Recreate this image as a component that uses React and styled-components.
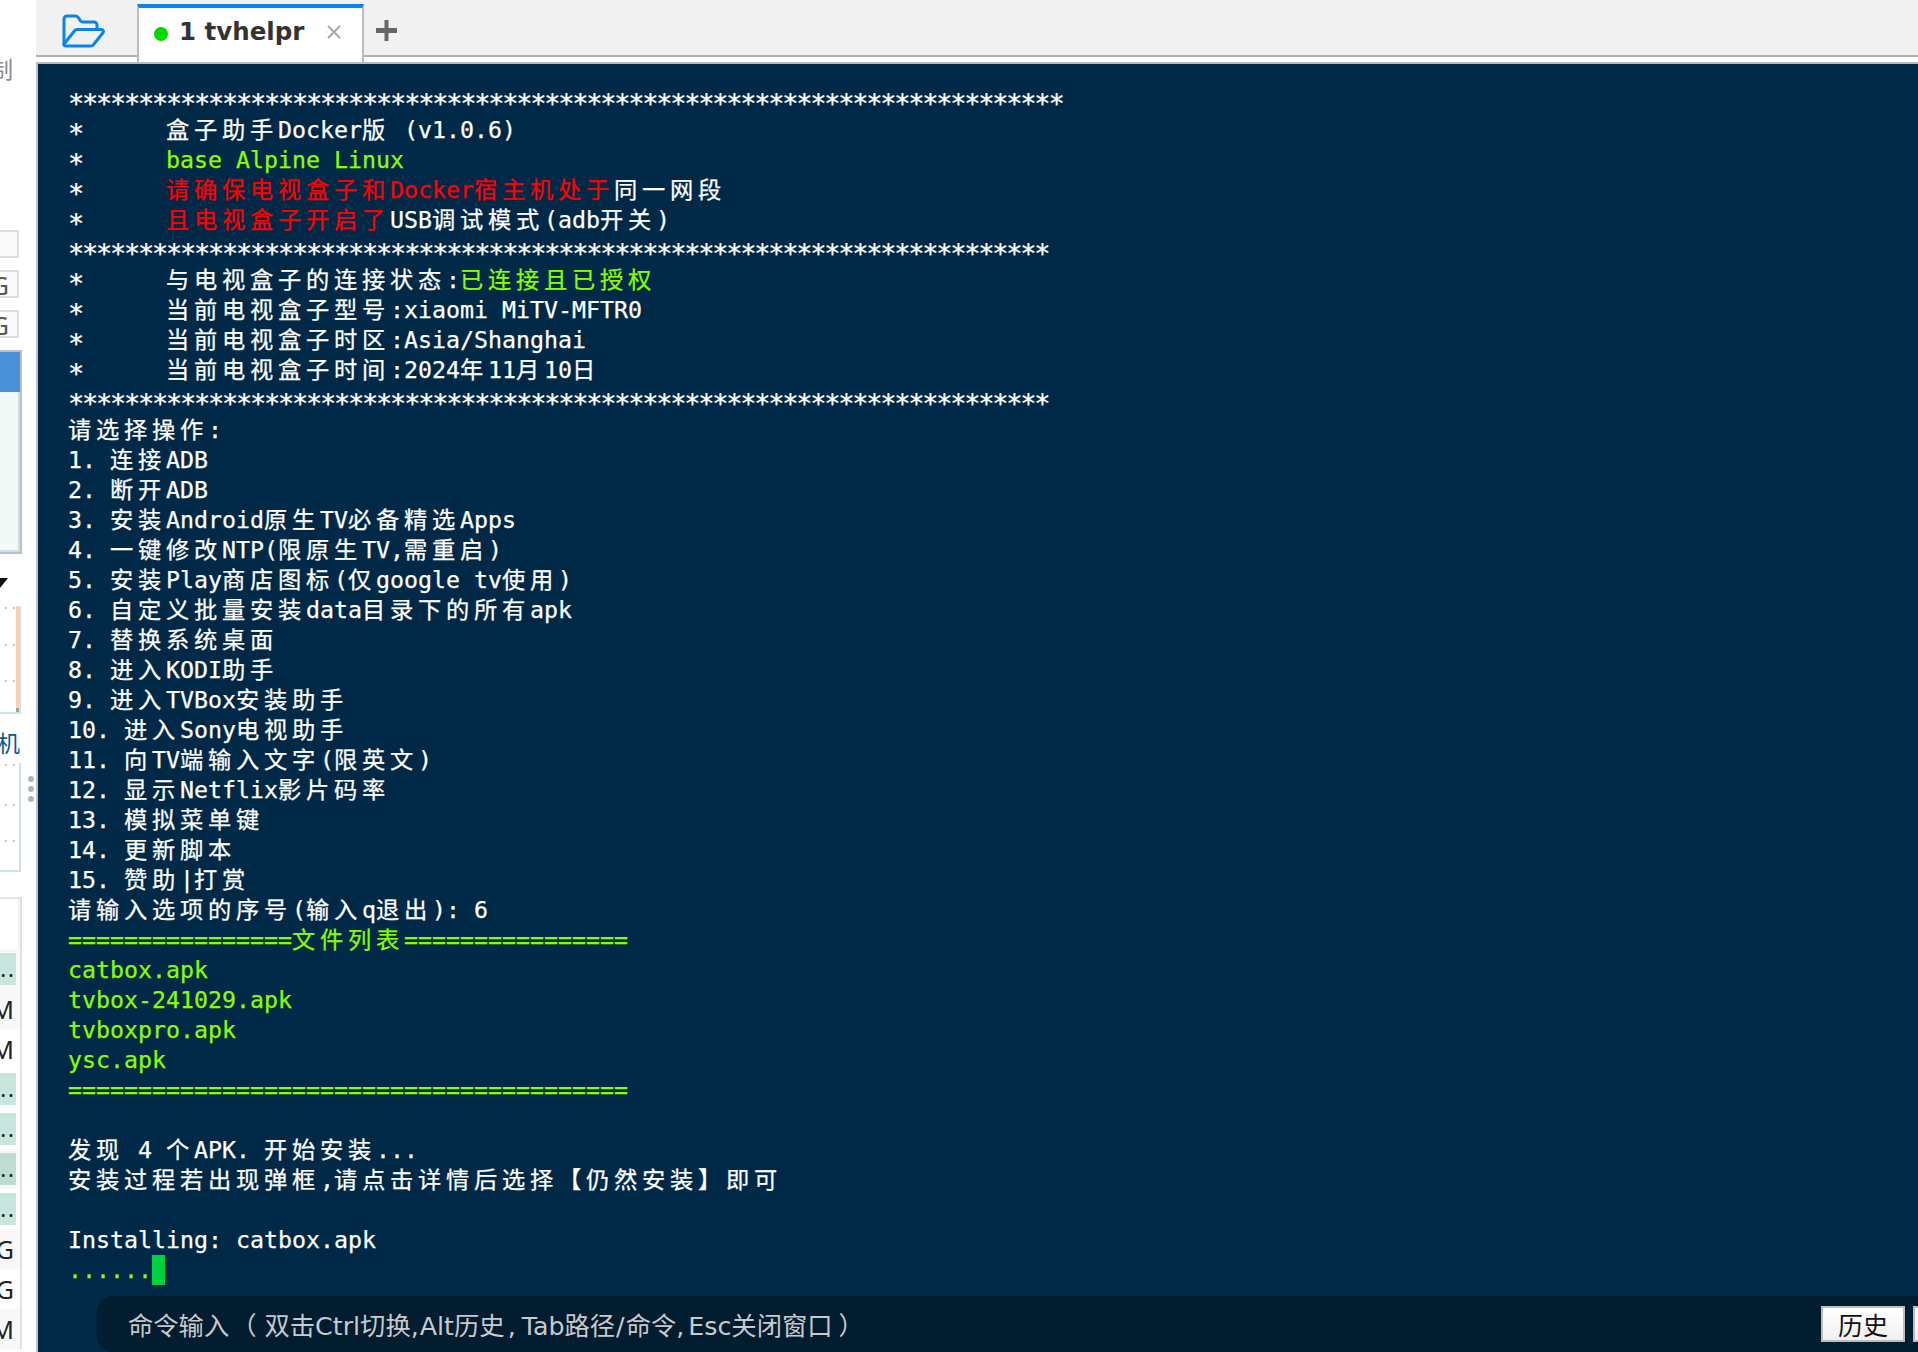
import React from 'react'
import styled, { createGlobalStyle } from 'styled-components'

const Global = createGlobalStyle`
  html, body { margin: 0; padding: 0; background: #fff; }
`

const Page = styled.div`
  width: 1918px;
  height: 1352px;
  display: flex;
  overflow: hidden;
  background: #fff;
`

/* the window behind the terminal, only its right edge shows */
const Side = styled.div`
  width: 36px;
  flex: none;
  position: relative;
  overflow: hidden;
  display: flex;
  flex-direction: column;
  font-family: "Noto Sans", "Noto Sans CJK SC", sans-serif;
`
const SideLabel = styled.div`
  height: 30px;
  width: ${({ $w }) => $w}px;
  margin-top: ${({ $top }) => $top}px;
  display: flex;
  justify-content: flex-end;
  overflow: hidden;
  white-space: nowrap;
  font-size: 23px;
  line-height: 30px;
  color: ${({ $color }) => $color};
`
const SmallBox = styled.div`
  box-sizing: border-box;
  width: 19px;
  height: 28px;
  margin-top: ${({ $top }) => $top}px;
  padding-right: 8px;
  background: #fafafa;
  border: 2px solid #dedede;
  border-left: none;
  display: flex;
  justify-content: flex-end;
  overflow: hidden;
  font-size: 25px;
  line-height: 26px;
  color: #555;
`
const BluePanel = styled.div`
  box-sizing: border-box;
  width: 22px;
  height: 204px;
  margin-top: 12px;
  background: #f3f9f6;
  border: 2px solid #c0c0c0;
  border-left: none;
  box-shadow: inset -2px -2px 0 #c9e0ea;
`
const BlueHead = styled.div`
  height: 40px;
  background: #4a90d6;
`
const Arrow = styled.div`
  width: 0;
  height: 0;
  margin-top: 24px;
  border-top: 10px solid #111;
  border-left: 8px solid transparent;
  border-right: 8px solid transparent;
  margin-left: -8px;
`
const Grid = styled.div`
  box-sizing: border-box;
  width: 21px;
  height: ${({ $h }) => $h}px;
  margin-top: ${({ $top }) => $top}px;
  border-right: 2px solid #cfe0e8;
  border-bottom: 2px solid #cfe0e8;
  display: flex;
  position: relative;
`
const Peach = styled.div`
  width: 3px;
  margin-left: auto;
  background: linear-gradient(#fbcdb4 96%, #9ea77f 96%);
`
const Dot = styled.i`
  position: absolute;
  left: ${({ $x }) => $x}px;
  top: ${({ $y }) => $y}px;
  width: 2px;
  height: 2px;
  background: #c4c4c4;
`
const Handle = styled.div`
  position: absolute;
  left: 28px;
  top: 776px;
  display: flex;
  flex-direction: column;
  gap: 4px;
`
const HandleDot = styled.i`
  width: 6px;
  height: 6px;
  border-radius: 50%;
  background: #b5b5b5;
`
const ListHead = styled.div`
  box-sizing: border-box;
  width: 22px;
  height: 52px;
  margin-top: 25px;
  border-top: 2px solid #e2e2e2;
  border-right: 2px solid #e2e2e2;
  background: #fff;
  box-shadow: inset -2px 0 0 #f3f3f3;
`
const ListRow = styled.div`
  box-sizing: border-box;
  width: 22px;
  height: 40px;
  flex: none;
  padding: 4px 6px 4px 0;
  background: ${({ $alt }) => ($alt ? '#f8f8f8' : '#fff')};
  border-right: 2px solid #e2e2e2;
  font-size: 25px;
  line-height: 32px;
  color: #222;
  display: flex;
  justify-content: flex-end;
  overflow: hidden;
`
const ChipRow = styled(ListRow)`
  padding-right: 4px;
`
const Chip = styled.div`
  width: 16px;
  flex: none;
  height: 32px;
  background: ${({ $dark }) => ($dark ? '#bfdcd3' : '#c8e6dd')};
  color: #222;
  font-size: 22px;
  line-height: 30px;
  letter-spacing: 2px;
  display: flex;
  justify-content: flex-end;
  overflow: hidden;
`

const Main = styled.div`
  flex: 1;
  min-width: 0;
  display: flex;
  flex-direction: column;
`
const TabBar = styled.div`
  box-sizing: border-box;
  height: 57px;
  flex: none;
  background: #f1f1f1;
  border-bottom: 2px solid #b0b0b0;
  display: flex;
  align-items: flex-start;
`
const FolderBtn = styled.div`
  width: 101px;
  height: 55px;
  box-sizing: border-box;
  padding: 14px 0 0 25px;
`
const Tab = styled.div`
  box-sizing: border-box;
  width: 227px;
  height: 58px;
  margin-top: 4px;
  position: relative;
  z-index: 1;
  background: #fff;
  border-top: 4px solid #0a84e8;
  border-left: 2px solid #bdbdbd;
  border-right: 2px solid #bdbdbd;
  display: flex;
  align-items: center;
  padding-left: 15px;
  padding-bottom: 8px;
  font-family: "DejaVu Sans", sans-serif;
  font-weight: bold;
  font-size: 24.5px;
  color: #333;
  white-space: pre;
`
const LiveDot = styled.i`
  width: 14px;
  height: 14px;
  border-radius: 50%;
  background: #00d800;
  margin: 6px 11px 0 0;
`
const TabName = styled.span``
const Close = styled.span`
  display: flex;
  margin-left: 23px;
  margin-top: 2px;
`
const AddTab = styled.div`
  margin: 20px 0 0 12px;
  display: flex;
`
const Gap = styled.div`
  height: 5px;
  flex: none;
  background: #fff;
`

const Terminal = styled.div`
  flex: 1;
  position: relative;
  box-sizing: border-box;
  border-top: 2px solid #b8bcbe;
  border-left: 2px solid #c0c0c0;
  background: #002947;
  padding: 21px 0 0 30px;
  overflow: hidden;
  font-family: "DejaVu Sans Mono", "Noto Sans CJK SC", monospace;
  font-size: 23.25px;
  color: #fff;
  -webkit-text-stroke: 0.25px;
`
const Line = styled.div`
  height: 30px;
  line-height: 30px;
  white-space: pre;
  color: ${({ $color }) => $color || '#fff'};
`
const Run = styled.span`
  color: ${({ $color }) => $color};
`
const Wide = styled.span`
  font-family: "Noto Sans CJK SC", sans-serif;
  font-size: 23.25px;
  line-height: 0;
  letter-spacing: 4.75px;
`
const Star = styled.span`
  font-size: 27px;
  line-height: 0;
  letter-spacing: -2.25px;
  vertical-align: -5px;
`
const Cursor = styled.span`
  display: inline-block;
  width: 13px;
  height: 30px;
  background: #00d040;
  vertical-align: top;
`

const Composer = styled.div`
  position: absolute;
  left: 59px;
  right: 0;
  bottom: 0;
  height: 56px;
  background: #021c30;
  border-radius: 16px 0 0 16px;
  display: flex;
  align-items: center;
  gap: 8px;
  padding-left: 31px;
  -webkit-text-stroke: 0;
`
const Prompt = styled.div`
  flex: 1;
  font-family: "DejaVu Sans", "Noto Sans CJK SC", sans-serif;
  font-size: 25.3px;
  color: #c8cacc;
  white-space: pre;
`
const Paren = styled.span`
  margin: 0 ${({ $r }) => $r}px 0 ${({ $l }) => $l}px;
`
const Sep = styled.span`
  margin: 0 ${({ $r }) => $r}px 0 ${({ $l }) => $l || 0}px;
`
const HistoryBtn = styled.div`
  box-sizing: border-box;
  flex: none;
  width: ${({ $w }) => $w}px;
  height: 36px;
  margin-right: ${({ $end }) => ($end ? -79 : 0)}px;
  background: linear-gradient(#fff, #f0f0f0);
  border: 2px solid #bdbdbd;
  font-family: "Noto Sans CJK SC", sans-serif;
  font-size: 25px;
  line-height: 32px;
  text-align: center;
  color: #111;
`

const GREEN = '#88ff00'
const RED = '#ff0000'
const stars = (n) => '*'.repeat(n)

const LINES = [
  [[stars(71)]],
  [['*      盒子助手Docker版 (v1.0.6)']],
  [['*      '], ['base Alpine Linux', GREEN]],
  [['*      '], ['请确保电视盒子和Docker宿主机处于', RED], ['同一网段']],
  [['*      '], ['且电视盒子开启了', RED], ['USB调试模式(adb开关)']],
  [[stars(70)]],
  [['*      与电视盒子的连接状态:'], ['已连接且已授权', GREEN]],
  [['*      当前电视盒子型号:xiaomi MiTV-MFTR0']],
  [['*      当前电视盒子时区:Asia/Shanghai']],
  [['*      当前电视盒子时间:2024年11月10日']],
  [[stars(70)]],
  [['请选择操作:']],
  [['1. 连接ADB']],
  [['2. 断开ADB']],
  [['3. 安装Android原生TV必备精选Apps']],
  [['4. 一键修改NTP(限原生TV,需重启)']],
  [['5. 安装Play商店图标(仅google tv使用)']],
  [['6. 自定义批量安装data目录下的所有apk']],
  [['7. 替换系统桌面']],
  [['8. 进入KODI助手']],
  [['9. 进入TVBox安装助手']],
  [['10. 进入Sony电视助手']],
  [['11. 向TV端输入文字(限英文)']],
  [['12. 显示Netflix影片码率']],
  [['13. 模拟菜单键']],
  [['14. 更新脚本']],
  [['15. 赞助|打赏']],
  [['请输入选项的序号(输入q退出): 6']],
  [['================文件列表================', GREEN]],
  [['catbox.apk', GREEN]],
  [['tvbox-241029.apk', GREEN]],
  [['tvboxpro.apk', GREEN]],
  [['ysc.apk', GREEN]],
  [['========================================', GREEN]],
  [[' ']],
  [['发现 4 个APK. 开始安装...']],
  [['安装过程若出现弹框,请点击详情后选择【仍然安装】即可']],
  [[' ']],
  [['Installing: catbox.apk']],
]

// CJK takes two terminal cells, everything else one
const Cells = ({ text }) =>
  text.split(/([\u2E80-\uFFFF]+|\*+)/).map((part, i) => {
    if (/[\u2E80-\uFFFF]/.test(part)) return <Wide key={i}>{part}</Wide>
    if (part[0] === '*') return <Star key={i}>{part}</Star>
    return part
  })

const FolderIcon = () => (
  <svg width="45" height="34" viewBox="0 0 45 34" fill="none" stroke="#0a84e8" strokeWidth="3" strokeLinejoin="round" strokeLinecap="round">
    <path d="M3 30V5a3 3 0 0 1 3-3h8.5a3 3 0 0 1 2.4 1.2l2.6 3.6a3 3 0 0 0 2.4 1.2H33a3 3 0 0 1 3 3v3.5" />
    <path d="M5 32h25a3 3 0 0 0 2.4-1.2l9.6-12c1-1.4.2-3.3-1.6-3.3H16a3 3 0 0 0-2.4 1.2L3 30c-.6 1 .6 2 2 2z" />
  </svg>
)

const SideBar = () => (
  <Side>
    <SideLabel $w={13} $top={54} $color="#888">制</SideLabel>
    <SmallBox $top={146} />
    <SmallBox $top={12}>G</SmallBox>
    <SmallBox $top={12}>G</SmallBox>
    <BluePanel><BlueHead /></BluePanel>
    <Arrow />
    <Grid $h={108} $top={18}>
      <Peach />
      {[1, 38, 74].flatMap((y) => [5, 13].map((x) => <Dot key={`${x}-${y}`} $x={x} $y={y} />))}
    </Grid>
    <SideLabel $w={20} $top={14} $color="#0a5a90">机</SideLabel>
    <Grid $h={109} $top={5}>
      {[1, 41, 77].flatMap((y) => [5, 13].map((x) => <Dot key={`${x}-${y}`} $x={x} $y={y} />))}
    </Grid>
    <Handle><HandleDot /><HandleDot /><HandleDot /></Handle>
    <ListHead />
    <ChipRow $alt><Chip>..</Chip></ChipRow>
    <ListRow $alt>M</ListRow>
    <ListRow>M</ListRow>
    <ChipRow><Chip>..</Chip></ChipRow>
    <ChipRow><Chip>..</Chip></ChipRow>
    <ChipRow $alt><Chip $dark>..</Chip></ChipRow>
    <ChipRow><Chip>..</Chip></ChipRow>
    <ListRow $alt>G</ListRow>
    <ListRow>G</ListRow>
    <ListRow $alt>M</ListRow>
  </Side>
)

export default function App() {
  return (
    <Page>
      <Global />
      <SideBar />
      <Main>
        <TabBar>
          <FolderBtn><FolderIcon /></FolderBtn>
          <Tab>
            <LiveDot />
            <TabName>1 tvhelpr</TabName>
            <Close>
              <svg width="14" height="14" viewBox="0 0 14 14" stroke="#a8a8a8" strokeWidth="2"><path d="M1 1l12 12M13 1L1 13" /></svg>
            </Close>
          </Tab>
          <AddTab>
            <svg width="21" height="21" viewBox="0 0 21 21" fill="#666"><path d="M9 0h3a.5.5 0 0 1 .5.5V8h8a.5.5 0 0 1 .5.5v4a.5.5 0 0 1-.5.5h-8v7.500a.5.5 0 0 1-.5.5H9a.5.5 0 0 1-.5-.5V13h-8a.5.5 0 0 1-.5-.5v-4A.5.5 0 0 1 .5 8h8V.5A.5.5 0 0 1 9 0z" /></svg>
          </AddTab>
        </TabBar>
        <Gap />
        <Terminal>
          {LINES.map((runs, i) => (
            <Line key={i}>
              {runs.map(([text, color], j) => (
                <Run key={j} $color={color}><Cells text={text} /></Run>
              ))}
            </Line>
          ))}
          <Line $color={GREEN}>......<Cursor /></Line>
          <Composer>
            <Prompt>
              命令输入<Paren $l={2} $r={8}>（</Paren>双击Ctrl切换<Sep $r={1}>,</Sep>Alt历史<Sep $l={3} $r={6}>,</Sep>Tab路径<Sep $l={1} $r={1}>/</Sep>命令<Sep $r={4}>,</Sep>Esc关闭窗口<Paren $l={6} $r={0}>）</Paren>
            </Prompt>
            <HistoryBtn $w={84}>历史</HistoryBtn>
            <HistoryBtn $w={84} $end />
          </Composer>
        </Terminal>
      </Main>
    </Page>
  )
}
